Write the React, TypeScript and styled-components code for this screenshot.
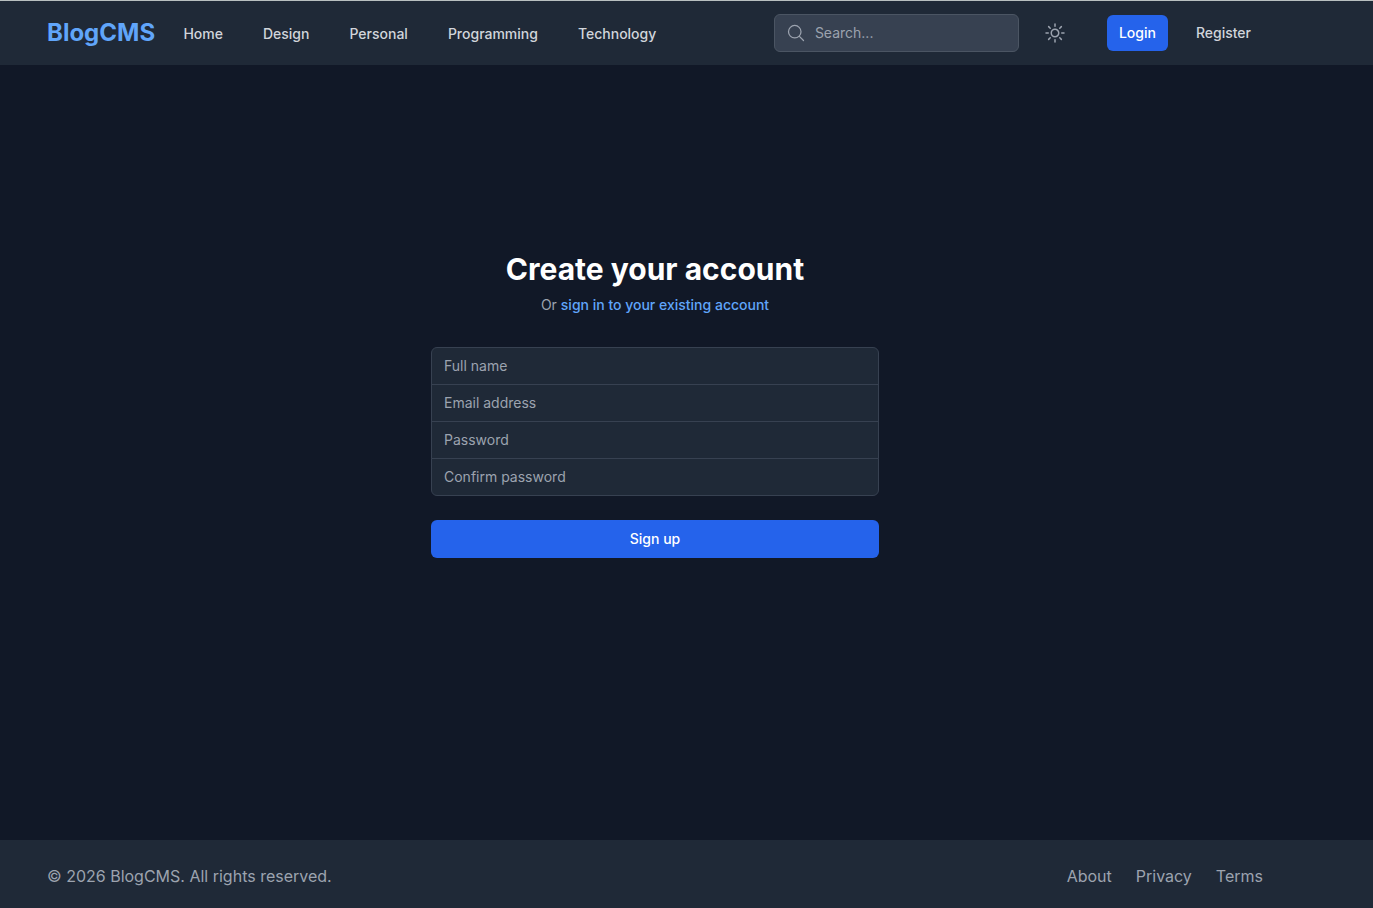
import React from "react";
import styled, { createGlobalStyle } from "styled-components";

const GlobalStyle = createGlobalStyle`
  *, *::before, *::after { box-sizing: border-box; }
  body {
    margin: 0;
    background: #111827;
    color: #f3f4f6;
    font-family: Inter, "Liberation Sans", sans-serif;
    font-size: 16px;
    line-height: 24px;
    overflow: hidden;
  }
  a { color: inherit; text-decoration: none; }
  button, input { font: inherit; }
`;

const Page = styled.div`
  display: flex;
  flex-direction: column;
  height: 100vh;
`;

const Header = styled.header`
  flex: none;
  background: #1f2937;
  border-top: 1px solid #b9c0c0;
`;

const Container = styled.div<{ $height: number }>`
  display: flex;
  align-items: center;
  justify-content: space-between;
  width: 1216px;
  height: ${(p) => p.$height}px;
  margin-left: 47px;
`;

const Group = styled.div<{ $gap?: number }>`
  display: flex;
  align-items: center;
  gap: ${(p) => p.$gap ?? 0}px;
`;

const Logo = styled.a`
  width: 108px;
  font-size: 24px;
  line-height: 32px;
  font-weight: 700;
  color: #60a5fa;
  white-space: nowrap;
`;

const Nav = styled.nav`
  display: flex;
  gap: 40px;
  padding-top: 2px;
  margin-left: 28.4px;
`;

const NavLink = styled.a`
  font-size: 14px;
  line-height: 20px;
  font-weight: 500;
  color: #d1d5db;
`;

const SearchBox = styled.label`
  display: flex;
  align-items: center;
  gap: 9px;
  width: 245px;
  height: 38px;
  padding: 0 11px;
  color: #9ca3af;
  background: #374151;
  border: 1px solid #4b5563;
  border-radius: 6px;
`;

const SearchInput = styled.input`
  flex: 1;
  min-width: 0;
  padding: 0;
  border: 0;
  outline: 0;
  background: transparent;
  color: #f3f4f6;
  font-size: 14px;
  line-height: 20px;
  &::placeholder { color: #9ca3af; opacity: 1; }
`;

const ThemeButton = styled.button`
  display: flex;
  padding: 8px;
  margin: 0 32px 0 16px;
  border: 0;
  background: transparent;
  color: #9ca3af;
`;

const AuthLink = styled.a<{ $primary?: boolean }>`
  padding: 8px 12px;
  border-radius: 6px;
  font-size: 14px;
  line-height: 20px;
  font-weight: 500;
  color: ${(p) => (p.$primary ? "#ffffff" : "#d1d5db")};
  background: ${(p) => (p.$primary ? "#2563eb" : "transparent")};
`;

const Main = styled.main`
  flex: 1;
  width: 1310px;
  padding-top: 186px;
`;

const Form = styled.form`
  display: flex;
  flex-direction: column;
  width: 448px;
  margin: 0 auto;
`;

const Title = styled.h1`
  margin: 0;
  font-size: 30px;
  line-height: 36px;
  font-weight: 700;
  text-align: center;
  color: #ffffff;
`;

const Subtitle = styled.p`
  margin: 8px 0 32px;
  font-size: 14px;
  line-height: 20px;
  text-align: center;
  color: #9ca3af;
`;

const SignInLink = styled.a`
  font-weight: 500;
  color: #60a5fa;
`;

const Fields = styled.div`
  display: flex;
  flex-direction: column;
`;

const Field = styled.input`
  height: 38px;
  padding: 0 12px 2px;
  border: 1px solid #374151;
  border-radius: 0;
  outline: 0;
  background: #1f2937;
  color: #ffffff;
  font-size: 14px;
  line-height: 20px;
  &::placeholder { color: #9ca3af; opacity: 1; }
  & + & { margin-top: -1px; }
  &:first-child { border-radius: 6px 6px 0 0; }
  &:last-child { border-radius: 0 0 6px 6px; }
`;

const SubmitButton = styled.button`
  height: 38px;
  margin-top: 24px;
  border: 0;
  border-radius: 6px;
  background: #2563eb;
  color: #ffffff;
  font-size: 14px;
  line-height: 20px;
  font-weight: 500;
`;

const Footer = styled.footer`
  flex: none;
  height: 68px;
  background: #1f2937;
  color: #9ca3af;
`;

const Icon = ({ size, path }: { size: number; path: string }) => (
  <svg width={size} height={size} viewBox="0 0 24 24" fill="none" stroke="currentColor"
    strokeWidth={1.5} strokeLinecap="round" strokeLinejoin="round">
    <path d={path} />
  </svg>
);

const SEARCH = "m21 21-5.197-5.197m0 0A7.5 7.5 0 1 0 5.196 5.196a7.5 7.5 0 0 0 10.607 10.607Z";
const SUN =
  "M12 3v2.25m6.364.386-1.591 1.591M21 12h-2.25m-.386 6.364-1.591-1.591M12 18.75V21m-4.773-4.227-1.591 1.591M5.25 12H3m4.227-4.773L5.636 5.636M15.75 12a3.75 3.75 0 1 1-7.5 0 3.75 3.75 0 0 1 7.5 0Z";

const categories = ["Home", "Design", "Personal", "Programming", "Technology"];
const fields = [
  { label: "Full name", type: "text" },
  { label: "Email address", type: "email" },
  { label: "Password", type: "password" },
  { label: "Confirm password", type: "password" },
];

export default function App() {
  return (
    <Page>
      <GlobalStyle />
      <Header>
        <Container $height={64}>
          <Group>
            <Logo href="#">BlogCMS</Logo>
            <Nav>
              {categories.map((c) => <NavLink key={c} href="#">{c}</NavLink>)}
            </Nav>
          </Group>
          <Group>
            <SearchBox>
              <Icon size={20} path={SEARCH} />
              <SearchInput placeholder="Search..." />
            </SearchBox>
            <ThemeButton aria-label="Toggle theme">
              <Icon size={24} path={SUN} />
            </ThemeButton>
            <Group $gap={16}>
              <AuthLink href="#" $primary>Login</AuthLink>
              <AuthLink href="#">Register</AuthLink>
            </Group>
          </Group>
        </Container>
      </Header>
      <Main>
        <Form onSubmit={(e) => e.preventDefault()}>
          <Title>Create your account</Title>
          <Subtitle>Or <SignInLink href="#">sign in to your existing account</SignInLink></Subtitle>
          <Fields>
            {fields.map((f) => (
              <Field key={f.label} type={f.type} placeholder={f.label} aria-label={f.label} />
            ))}
          </Fields>
          <SubmitButton type="submit">Sign up</SubmitButton>
        </Form>
      </Main>
      <Footer>
        <Container $height={72}>
          <span>© 2026 BlogCMS. All rights reserved.</span>
          <Group $gap={24}>
            <a href="#">About</a>
            <a href="#">Privacy</a>
            <a href="#">Terms</a>
          </Group>
        </Container>
      </Footer>
    </Page>
  );
}
